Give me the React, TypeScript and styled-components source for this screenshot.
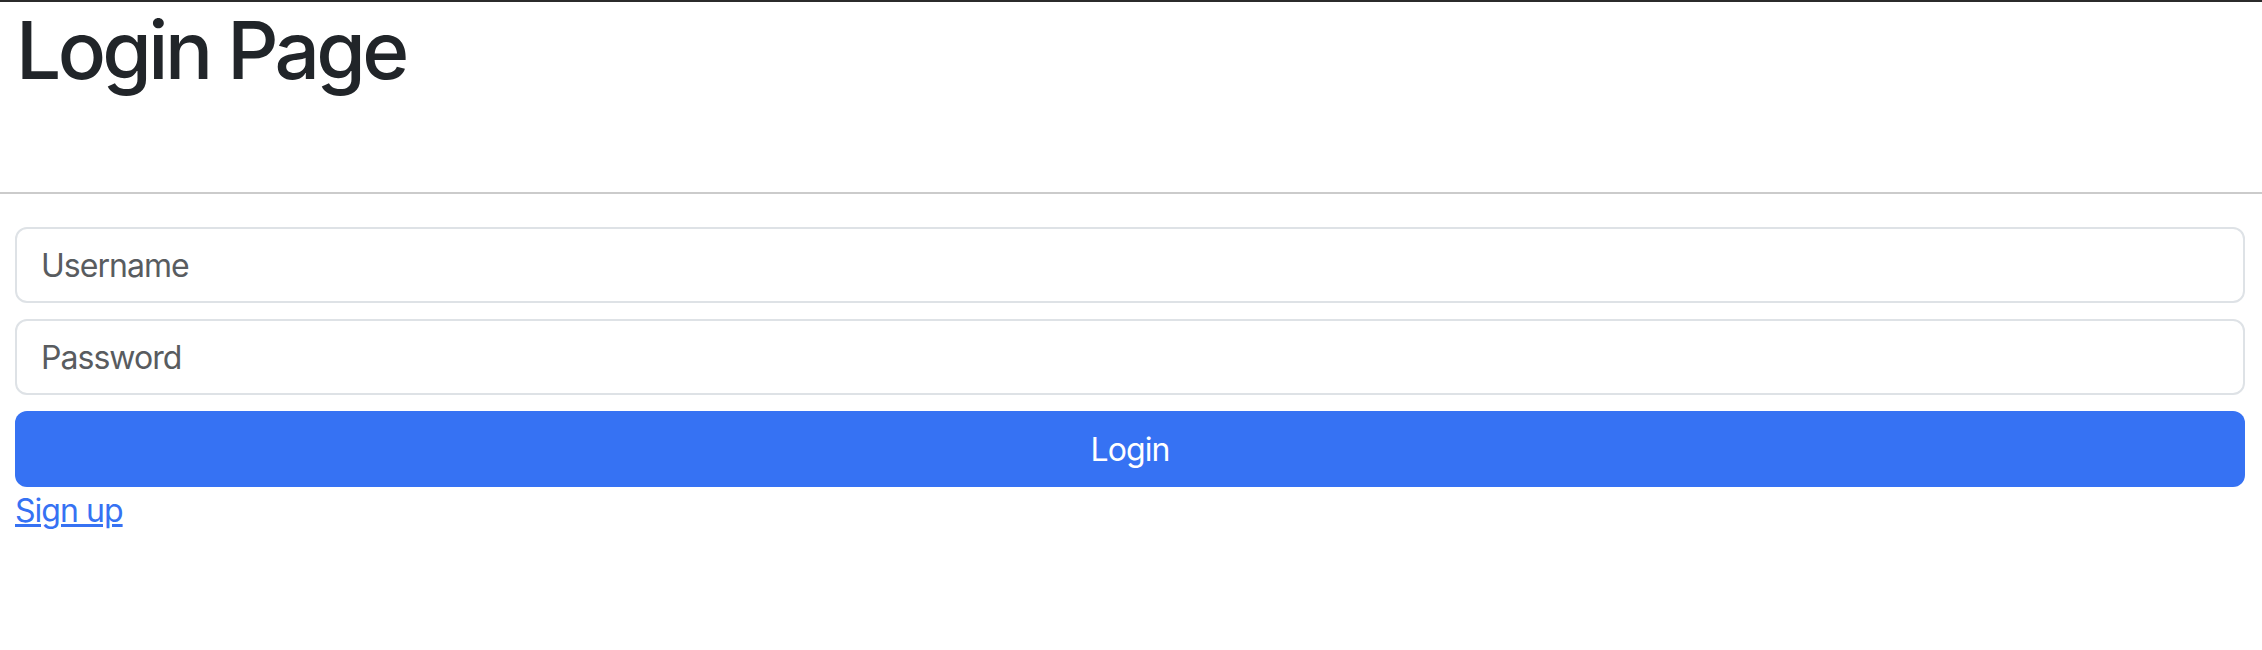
import React, { useState } from "react";
import styled, { createGlobalStyle } from "styled-components";

const GlobalStyle = createGlobalStyle`
    * {
        box-sizing: border-box;
    }

    body {
        margin: 0;
        background: #fff;
        color: #212529;
        font-family: Inter, "Noto Sans", "Liberation Sans", sans-serif;
        border-top: 2px solid #2b2b2b;
    }
`;

const App = () => {
    const [username, setUsername] = useState("");
    const [password, setPassword] = useState("");

    return (
        <>
            <GlobalStyle />
            <PageHeader>
                <Title>Login Page</Title>
            </PageHeader>
            <LoginForm onSubmit={(e) => e.preventDefault()}>
                <TextInput
                    type="text"
                    placeholder="Username"
                    value={username}
                    onChange={(e) => setUsername(e.target.value)}
                />
                <TextInput
                    type="password"
                    placeholder="Password"
                    value={password}
                    onChange={(e) => setPassword(e.target.value)}
                />
                <SubmitButton type="submit">Login</SubmitButton>
                <SignUpLink href="#signup">Sign up</SignUpLink>
            </LoginForm>
        </>
    );
};

const PageHeader = styled.header`
    height: 192px;
    padding: 0 16px;
    border-bottom: 2px solid #cbcbcb;
`;

const Title = styled.h1`
    margin: 0;
    font-size: 80px;
    font-weight: 500;
    line-height: 1.2;
    letter-spacing: -0.045em;
    color: #212529;
`;

const LoginForm = styled.form`
    display: flex;
    flex-direction: column;
    gap: 16px;
    padding: 33px 17px 0 15px;
`;

const TextInput = styled.input`
    width: 100%;
    height: 76px;
    padding: 12px 24px;
    border: 2px solid #dee2e6;
    border-radius: 12px;
    font-family: inherit;
    font-size: 32px;
    letter-spacing: -0.03em;
    color: #212529;
    outline: none;

    &::placeholder {
        color: #595c5f;
    }
`;

const SubmitButton = styled.button`
    width: 100%;
    height: 76px;
    border: none;
    border-radius: 12px;
    background-color: #3672f3;
    color: #fff;
    font-family: inherit;
    font-size: 32px;
    letter-spacing: -0.03em;
    cursor: pointer;
`;

const SignUpLink = styled.a`
    align-self: flex-start;
    margin-top: -16px;
    font-size: 32px;
    line-height: 1.5;
    letter-spacing: -0.03em;
    color: #3672f3;
    text-decoration: underline;
`;

export default App;
